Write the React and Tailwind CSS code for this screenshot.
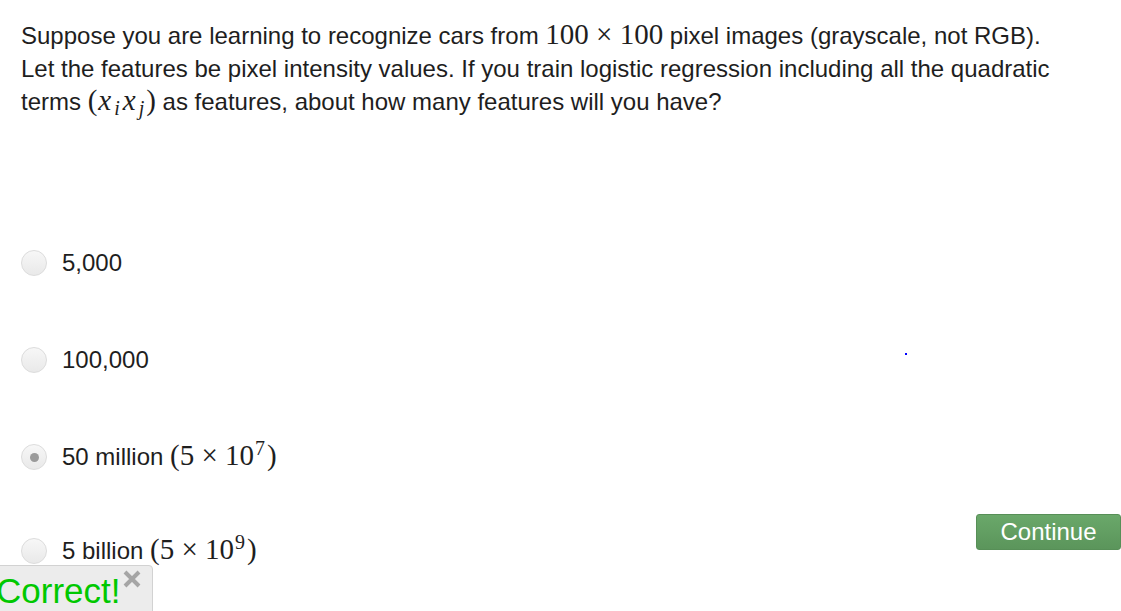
import React from "react";

const sans = { fontFamily: '"Liberation Sans", Arial, sans-serif' };

function M({ children }) {
  return (
    <span className="font-['Liberation_Serif',serif] text-[29px] leading-none">{children}</span>
  );
}

function Radio({ checked }) {
  return (
    <span className="flex h-[26px] w-[26px] shrink-0 items-center justify-center rounded-full border border-[#dcdcdc] bg-gradient-to-b from-[#f7f7f7] to-[#e9e9e9]">
      {checked && <span className="h-[9px] w-[9px] rounded-full bg-[#9a9a9a]" />}
    </span>
  );
}

function Option({ checked, children, className = "" }) {
  return (
    <div className={"flex h-[26px] items-center gap-[15px] " + className}>
      <Radio checked={checked} />
      <span className="whitespace-nowrap text-[24px] text-[#1e1e1e]">{children}</span>
    </div>
  );
}

export default function App() {
  return (
    <div
      className="relative h-[611px] w-[1121px] overflow-hidden bg-white font-['Liberation_Sans',Arial,sans-serif] text-[#1e1e1e]"
      style={sans}
    >
      <div className="pl-[21px] pt-[19px] text-[24px] leading-[33px]">
        <p className="whitespace-nowrap">
          Suppose you are learning to recognize cars from <M>100 × 100</M> pixel images (grayscale, not RGB).
          <br />
          Let the features be pixel intensity values. If you train logistic regression including all the quadratic
          <br />
          terms{" "}
          <M>
            (<i className="ml-[1px]">x</i>
            <sub className="ml-[3px] text-[20px] italic">i</sub>
            <i className="ml-[3px]">x</i>
            <sub className="ml-[3px] text-[20px] italic">j</sub>
            <span className="ml-[2px]">)</span>
          </M>{" "}
          as features, about how many features will you have?
        </p>
      </div>

      <div className="mt-[132px] flex flex-col pl-[21px]">
        <Option>5,000</Option>
        <Option className="mt-[71px]">100,000</Option>
        <Option checked className="mt-[71px]">
          50 million{" "}
          <M>
            (5 × 10<sup className="ml-[1px] text-[20px]">7</sup>
            <span className="ml-[2px]">)</span>
          </M>
        </Option>
        <div className="mt-[57px] flex items-start justify-between">
          <Option className="mt-[11px]">
            5 billion{" "}
            <M>
              (5 × 10<sup className="ml-[1px] text-[20px]">9</sup>
              <span className="ml-[2px]">)</span>
            </M>
          </Option>
          <button className="mt-[-13px] h-[36px] w-[145px] rounded-[3px] border border-[#578f57] bg-gradient-to-b from-[#6aa86a] to-[#5b955b] text-[24px] leading-none text-white">
            Continue
          </button>
        </div>
      </div>

      <div className="absolute left-[905px] top-[353px] h-[2px] w-[2px] bg-[#0000ff]" />

      <div className="absolute left-[-1px] top-[565px] flex h-[60px] w-[154px] items-start rounded-tr-[4px] border border-[#d2d2d2] bg-[#ececec]">
        <span className="ml-[-4px] mt-[4px] text-[35px] leading-[42px] text-[#00c800]">Correct!</span>
        <svg className="ml-[3px] mt-[4px]" width="18" height="18" viewBox="0 0 18 18">
          <path d="M2 2 L16 16 M16 2 L2 16" stroke="#a5a5a5" strokeWidth="4" strokeLinecap="butt" />
        </svg>
      </div>
    </div>
  );
}
